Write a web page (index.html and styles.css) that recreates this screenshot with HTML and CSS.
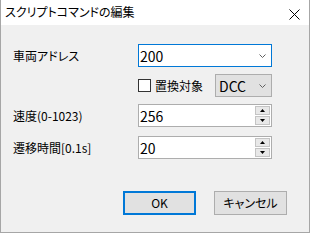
FILE: index.html
```
<!DOCTYPE html>
<html lang="ja">
<head>
<meta charset="utf-8">
<link rel="stylesheet" href="styles.css">
</head>
<body>
<div class="window">
  <div class="titlebar">
    <span class="title">スクリプトコマンドの編集</span>
    <svg class="close" width="11" height="11" viewBox="0 0 11 11"><path d="M0.5 0.5 L10.5 10.5 M10.5 0.5 L0.5 10.5" stroke="#000" stroke-width="1" fill="none"/></svg>
  </div>
  <div class="content">
    <div class="row r1">
      <span class="label">車両アドレス</span>
      <div class="combo focus"><span class="val">200</span><svg class="chev" width="7" height="4" viewBox="0 0 7 4"><polyline points="0.5,0.5 3.5,3.5 6.5,0.5" stroke="#606060" fill="none" stroke-width="1"/></svg></div>
    </div>
    <div class="row r2">
      <span class="label"></span>
      <div class="ctrl">
        <span class="check"></span>
        <span class="check-label">置換対象</span>
        <div class="combo dcc"><span class="val">DCC</span><svg class="chev" width="7" height="4" viewBox="0 0 7 4"><polyline points="0.5,0.5 3.5,3.5 6.5,0.5" stroke="#606060" fill="none" stroke-width="1"/></svg></div>
      </div>
    </div>
    <div class="row r3">
      <span class="label">速度(0-1023)</span>
      <div class="field"><span class="val">256</span><div class="spin"><div class="sb"><svg width="5" height="3" viewBox="0 0 5 3"><polygon points="2.5,0 5,3 0,3" fill="#000"/></svg></div><div class="sb"><svg width="5" height="3" viewBox="0 0 5 3"><polygon points="0,0 5,0 2.5,3" fill="#000"/></svg></div></div></div>
    </div>
    <div class="row r4">
      <span class="label">遷移時間[0.1s]</span>
      <div class="field"><span class="val">20</span><div class="spin"><div class="sb"><svg width="5" height="3" viewBox="0 0 5 3"><polygon points="2.5,0 5,3 0,3" fill="#000"/></svg></div><div class="sb"><svg width="5" height="3" viewBox="0 0 5 3"><polygon points="0,0 5,0 2.5,3" fill="#000"/></svg></div></div></div>
    </div>
    <div class="buttons">
      <div class="btn default">OK</div>
      <div class="btn">キャンセル</div>
    </div>
  </div>
</div>
</body>
</html>
```
FILE: styles.css
```
html, body {
  margin: 0;
  padding: 0;
  background: #ffffff;
}
body {
  font-family: "Noto Sans CJK JP", "Noto Sans", sans-serif;
  font-size: 12px;
  font-feature-settings: "palt";
  color: #000;
}
.window {
  width: 310px;
  height: 233px;
  box-sizing: border-box;
  border: 1px solid #a6a6a6;
  border-top: none;
  background: #f0f0f0;
  display: flex;
  flex-direction: column;
}
.titlebar {
  height: 25px;
  background: #ffffff;
  display: flex;
  justify-content: space-between;
  align-items: flex-start;
  flex: none;
}
.title {
  padding-left: 4px;
  line-height: 24px;
  font-size: 12px;
}
.close {
  margin-top: 9px;
  margin-right: 9px;
}
.content {
  padding-left: 12px;
  display: flex;
  flex-direction: column;
}
.row {
  display: flex;
  align-items: center;
  height: 23px;
}
.r1 { margin-top: 19px; }
.r2 { margin-top: 7px; }
.r3 { margin-top: 7px; }
.r4 { margin-top: 9px; }
.label {
  width: 125px;
  flex: none;
  line-height: 16px;
}
.combo {
  box-sizing: border-box;
  height: 23px;
  display: flex;
  align-items: center;
  justify-content: space-between;
  border: 1px solid #adadad;
}
.combo.focus {
  width: 134px;
  border-color: #0078d7;
  background: #ffffff;
  padding-left: 1px;
  padding-right: 5px;
}
.val {
  font-size: 14px;
  line-height: 18px;
}
.ctrl {
  display: flex;
  align-items: center;
}
.check {
  width: 13px;
  height: 13px;
  box-sizing: border-box;
  border: 1px solid #333333;
  background: #ffffff;
}
.check-label {
  margin-left: 4px;
  width: 60px;
}
.combo.dcc {
  width: 57px;
  background: #e1e1e1;
  padding-left: 3px;
  padding-right: 5px;
}
.field {
  box-sizing: border-box;
  width: 134px;
  height: 23px;
  border: 1px solid #adadad;
  background: #ffffff;
  display: flex;
  align-items: center;
  justify-content: space-between;
  padding-left: 1px;
  padding-right: 1px;
}
.spin {
  width: 15px;
  height: 19px;
  display: flex;
  flex-direction: column;
  gap: 1px;
}
.sb {
  flex: 1;
  box-sizing: border-box;
  border: 1px solid #c4c4c4;
  background: #e8e8e8;
  display: flex;
  align-items: center;
  justify-content: center;
}
.buttons {
  display: flex;
  margin-top: 32px;
  margin-left: 110px;
  gap: 18px;
}
.btn {
  box-sizing: border-box;
  width: 73px;
  height: 24px;
  background: #e1e1e1;
  border: 1px solid #adadad;
  display: flex;
  align-items: center;
  justify-content: center;
  line-height: 16px;
}
.btn.default {
  border: 2px solid #0078d7;
}
```
